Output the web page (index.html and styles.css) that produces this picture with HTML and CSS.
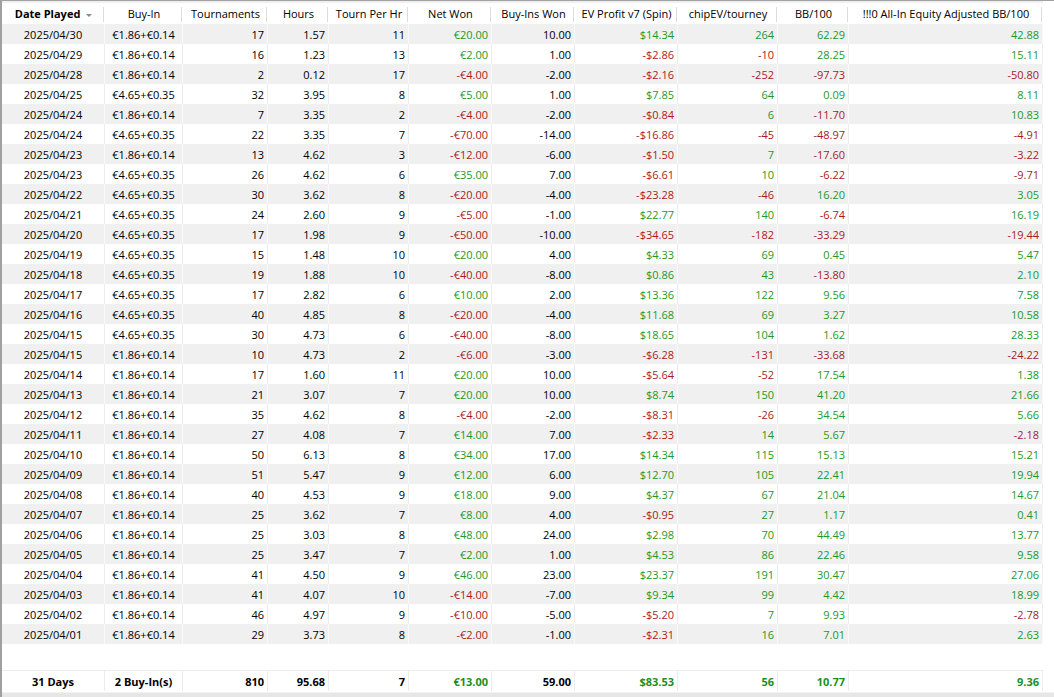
FILE: index.html
```html
<!DOCTYPE html>
<html>
<head>
<meta charset="utf-8">
<link rel="stylesheet" href="styles.css">
</head>
<body>
<div class="frame">
<table class="grid">
<colgroup>
<col class="c1"><col class="c2"><col class="c3"><col class="c4"><col class="c5"><col class="c6"><col class="c7"><col class="c8"><col class="c9"><col class="c10"><col class="c11">
</colgroup>
<thead>
<tr>
<th class="sorted">Date Played <span class="arrow"></span></th><th>Buy-In</th><th>Tournaments</th><th>Hours</th><th>Tourn Per Hr</th><th>Net Won</th><th>Buy-Ins Won</th><th>EV Profit v7 (Spin)</th><th>chipEV/tourney</th><th>BB/100</th><th>!!!0 All-In Equity Adjusted BB/100</th>
</tr>
</thead>
<tbody>
<tr class="odd"><td class="c">2025/04/30</td><td class="c">€1.86+€0.14</td><td>17</td><td>1.57</td><td>11</td><td class="p">€20.00</td><td>10.00</td><td class="p">$14.34</td><td class="p">264</td><td class="p">62.29</td><td class="p">42.88</td></tr>
<tr><td class="c">2025/04/29</td><td class="c">€1.86+€0.14</td><td>16</td><td>1.23</td><td>13</td><td class="p">€2.00</td><td>1.00</td><td class="n">-$2.86</td><td class="n">-10</td><td class="p">28.25</td><td class="p">15.11</td></tr>
<tr class="odd"><td class="c">2025/04/28</td><td class="c">€1.86+€0.14</td><td>2</td><td>0.12</td><td>17</td><td class="n">-€4.00</td><td>-2.00</td><td class="n">-$2.16</td><td class="n">-252</td><td class="n">-97.73</td><td class="n">-50.80</td></tr>
<tr><td class="c">2025/04/25</td><td class="c">€4.65+€0.35</td><td>32</td><td>3.95</td><td>8</td><td class="p">€5.00</td><td>1.00</td><td class="p">$7.85</td><td class="p">64</td><td class="p">0.09</td><td class="p">8.11</td></tr>
<tr class="odd"><td class="c">2025/04/24</td><td class="c">€1.86+€0.14</td><td>7</td><td>3.35</td><td>2</td><td class="n">-€4.00</td><td>-2.00</td><td class="n">-$0.84</td><td class="p">6</td><td class="n">-11.70</td><td class="p">10.83</td></tr>
<tr><td class="c">2025/04/24</td><td class="c">€4.65+€0.35</td><td>22</td><td>3.35</td><td>7</td><td class="n">-€70.00</td><td>-14.00</td><td class="n">-$16.86</td><td class="n">-45</td><td class="n">-48.97</td><td class="n">-4.91</td></tr>
<tr class="odd"><td class="c">2025/04/23</td><td class="c">€1.86+€0.14</td><td>13</td><td>4.62</td><td>3</td><td class="n">-€12.00</td><td>-6.00</td><td class="n">-$1.50</td><td class="p">7</td><td class="n">-17.60</td><td class="n">-3.22</td></tr>
<tr><td class="c">2025/04/23</td><td class="c">€4.65+€0.35</td><td>26</td><td>4.62</td><td>6</td><td class="p">€35.00</td><td>7.00</td><td class="n">-$6.61</td><td class="p">10</td><td class="n">-6.22</td><td class="n">-9.71</td></tr>
<tr class="odd"><td class="c">2025/04/22</td><td class="c">€4.65+€0.35</td><td>30</td><td>3.62</td><td>8</td><td class="n">-€20.00</td><td>-4.00</td><td class="n">-$23.28</td><td class="n">-46</td><td class="p">16.20</td><td class="p">3.05</td></tr>
<tr><td class="c">2025/04/21</td><td class="c">€4.65+€0.35</td><td>24</td><td>2.60</td><td>9</td><td class="n">-€5.00</td><td>-1.00</td><td class="p">$22.77</td><td class="p">140</td><td class="n">-6.74</td><td class="p">16.19</td></tr>
<tr class="odd"><td class="c">2025/04/20</td><td class="c">€4.65+€0.35</td><td>17</td><td>1.98</td><td>9</td><td class="n">-€50.00</td><td>-10.00</td><td class="n">-$34.65</td><td class="n">-182</td><td class="n">-33.29</td><td class="n">-19.44</td></tr>
<tr><td class="c">2025/04/19</td><td class="c">€4.65+€0.35</td><td>15</td><td>1.48</td><td>10</td><td class="p">€20.00</td><td>4.00</td><td class="p">$4.33</td><td class="p">69</td><td class="p">0.45</td><td class="p">5.47</td></tr>
<tr class="odd"><td class="c">2025/04/18</td><td class="c">€4.65+€0.35</td><td>19</td><td>1.88</td><td>10</td><td class="n">-€40.00</td><td>-8.00</td><td class="p">$0.86</td><td class="p">43</td><td class="n">-13.80</td><td class="p">2.10</td></tr>
<tr><td class="c">2025/04/17</td><td class="c">€4.65+€0.35</td><td>17</td><td>2.82</td><td>6</td><td class="p">€10.00</td><td>2.00</td><td class="p">$13.36</td><td class="p">122</td><td class="p">9.56</td><td class="p">7.58</td></tr>
<tr class="odd"><td class="c">2025/04/16</td><td class="c">€4.65+€0.35</td><td>40</td><td>4.85</td><td>8</td><td class="n">-€20.00</td><td>-4.00</td><td class="p">$11.68</td><td class="p">69</td><td class="p">3.27</td><td class="p">10.58</td></tr>
<tr><td class="c">2025/04/15</td><td class="c">€4.65+€0.35</td><td>30</td><td>4.73</td><td>6</td><td class="n">-€40.00</td><td>-8.00</td><td class="p">$18.65</td><td class="p">104</td><td class="p">1.62</td><td class="p">28.33</td></tr>
<tr class="odd"><td class="c">2025/04/15</td><td class="c">€1.86+€0.14</td><td>10</td><td>4.73</td><td>2</td><td class="n">-€6.00</td><td>-3.00</td><td class="n">-$6.28</td><td class="n">-131</td><td class="n">-33.68</td><td class="n">-24.22</td></tr>
<tr><td class="c">2025/04/14</td><td class="c">€1.86+€0.14</td><td>17</td><td>1.60</td><td>11</td><td class="p">€20.00</td><td>10.00</td><td class="n">-$5.64</td><td class="n">-52</td><td class="p">17.54</td><td class="p">1.38</td></tr>
<tr class="odd"><td class="c">2025/04/13</td><td class="c">€1.86+€0.14</td><td>21</td><td>3.07</td><td>7</td><td class="p">€20.00</td><td>10.00</td><td class="p">$8.74</td><td class="p">150</td><td class="p">41.20</td><td class="p">21.66</td></tr>
<tr><td class="c">2025/04/12</td><td class="c">€1.86+€0.14</td><td>35</td><td>4.62</td><td>8</td><td class="n">-€4.00</td><td>-2.00</td><td class="n">-$8.31</td><td class="n">-26</td><td class="p">34.54</td><td class="p">5.66</td></tr>
<tr class="odd"><td class="c">2025/04/11</td><td class="c">€1.86+€0.14</td><td>27</td><td>4.08</td><td>7</td><td class="p">€14.00</td><td>7.00</td><td class="n">-$2.33</td><td class="p">14</td><td class="p">5.67</td><td class="n">-2.18</td></tr>
<tr><td class="c">2025/04/10</td><td class="c">€1.86+€0.14</td><td>50</td><td>6.13</td><td>8</td><td class="p">€34.00</td><td>17.00</td><td class="p">$14.34</td><td class="p">115</td><td class="p">15.13</td><td class="p">15.21</td></tr>
<tr class="odd"><td class="c">2025/04/09</td><td class="c">€1.86+€0.14</td><td>51</td><td>5.47</td><td>9</td><td class="p">€12.00</td><td>6.00</td><td class="p">$12.70</td><td class="p">105</td><td class="p">22.41</td><td class="p">19.94</td></tr>
<tr><td class="c">2025/04/08</td><td class="c">€1.86+€0.14</td><td>40</td><td>4.53</td><td>9</td><td class="p">€18.00</td><td>9.00</td><td class="p">$4.37</td><td class="p">67</td><td class="p">21.04</td><td class="p">14.67</td></tr>
<tr class="odd"><td class="c">2025/04/07</td><td class="c">€1.86+€0.14</td><td>25</td><td>3.62</td><td>7</td><td class="p">€8.00</td><td>4.00</td><td class="n">-$0.95</td><td class="p">27</td><td class="p">1.17</td><td class="p">0.41</td></tr>
<tr><td class="c">2025/04/06</td><td class="c">€1.86+€0.14</td><td>25</td><td>3.03</td><td>8</td><td class="p">€48.00</td><td>24.00</td><td class="p">$2.98</td><td class="p">70</td><td class="p">44.49</td><td class="p">13.77</td></tr>
<tr class="odd"><td class="c">2025/04/05</td><td class="c">€1.86+€0.14</td><td>25</td><td>3.47</td><td>7</td><td class="p">€2.00</td><td>1.00</td><td class="p">$4.53</td><td class="p">86</td><td class="p">22.46</td><td class="p">9.58</td></tr>
<tr><td class="c">2025/04/04</td><td class="c">€1.86+€0.14</td><td>41</td><td>4.50</td><td>9</td><td class="p">€46.00</td><td>23.00</td><td class="p">$23.37</td><td class="p">191</td><td class="p">30.47</td><td class="p">27.06</td></tr>
<tr class="odd"><td class="c">2025/04/03</td><td class="c">€1.86+€0.14</td><td>41</td><td>4.07</td><td>10</td><td class="n">-€14.00</td><td>-7.00</td><td class="p">$9.34</td><td class="p">99</td><td class="p">4.42</td><td class="p">18.99</td></tr>
<tr><td class="c">2025/04/02</td><td class="c">€1.86+€0.14</td><td>46</td><td>4.97</td><td>9</td><td class="n">-€10.00</td><td>-5.00</td><td class="n">-$5.20</td><td class="p">7</td><td class="p">9.93</td><td class="n">-2.78</td></tr>
<tr class="odd"><td class="c">2025/04/01</td><td class="c">€1.86+€0.14</td><td>29</td><td>3.73</td><td>8</td><td class="n">-€2.00</td><td>-1.00</td><td class="n">-$2.31</td><td class="p">16</td><td class="p">7.01</td><td class="p">2.63</td></tr>
</tbody>
</table>
<div class="spacer"></div>
<table class="grid totals">
<colgroup>
<col class="c1"><col class="c2"><col class="c3"><col class="c4"><col class="c5"><col class="c6"><col class="c7"><col class="c8"><col class="c9"><col class="c10"><col class="c11">
</colgroup>
<tbody>
<tr><td class="c">31 Days</td><td class="c">2 Buy-In(s)</td><td>810</td><td>95.68</td><td>7</td><td class="p">€13.00</td><td>59.00</td><td class="p">$83.53</td><td class="p">56</td><td class="p">10.77</td><td class="p">9.36</td></tr>
</tbody>
</table>
<div class="hbar"></div>
</div>
</body>
</html>
```
FILE: styles.css
```css
html, body {
  margin: 0;
  padding: 0;
  background: #ffffff;
}
body {
  font-family: "Open Sans", "Noto Sans", "Liberation Sans", sans-serif;
  font-size: 11px;
  color: #000;
}
.frame {
  width: 1052px;
  height: 696px;
  border-left: 2px solid #a0a0a0;
  border-top: 1px solid #a0a0a0;
  display: flex;
  flex-direction: column;
  background: #fff;
}
.grid {
  width: 1041px;
  table-layout: fixed;
  border-collapse: separate;
  border-spacing: 0;
  flex: none;
}
.c1 { width: 103px; }
.c2 { width: 78px; }
.c3 { width: 85px; }
.c4 { width: 61px; }
.c5 { width: 80px; }
.c6 { width: 83px; }
.c7 { width: 83px; }
.c8 { width: 103px; }
.c9 { width: 100px; }
.c10 { width: 71px; }
.c11 { width: 194px; }

.grid th {
  height: 23px;
  padding: 0;
  font-weight: normal;
  text-align: center;
  white-space: nowrap;
  overflow: hidden;
  background: linear-gradient(#dcdcdc, #dcdcdc) no-repeat right 1px bottom 2px / 1px 15px, linear-gradient(#f0f0f0, #f0f0f0) no-repeat top / 100% 2px, #ffffff;
  box-sizing: border-box;
  padding-top: 2px;
}
.grid th.sorted {
  font-weight: bold;
}
.arrow {
  display: inline-block;
  width: 0;
  height: 0;
  border-left: 3px solid transparent;
  border-right: 3px solid transparent;
  border-top: 3px solid #8a8a8a;
  vertical-align: middle;
  margin-left: 3px;
  margin-top: 1px;
}
.grid td {
  height: 20px;
  padding: 0 3px 0 0;
  text-align: right;
  white-space: nowrap;
  overflow: hidden;
  border-right: 1px solid #ececec;
  box-sizing: border-box;
}
.grid tr.odd td {
  background: #f0f0f0;
  border-right-color: #f9f9f9;
}
.grid td.c {
  text-align: center;
  padding: 0;
}
.grid td.p { color: #23982a; }
.grid td.n { color: #a81c1c; }

.spacer {
  height: 26px;
  flex: none;
}
.totals {
  border-top: 1px solid #ececec;
}
.totals td {
  font-weight: bold;
  height: 20px;
}
.totals td.p { color: #1d8f22; }
.hbar {
  flex: 1;
  margin-top: 1px;
  background: #e6e6e6;
  border-top: 1px solid #f2f2f2;
}
```
